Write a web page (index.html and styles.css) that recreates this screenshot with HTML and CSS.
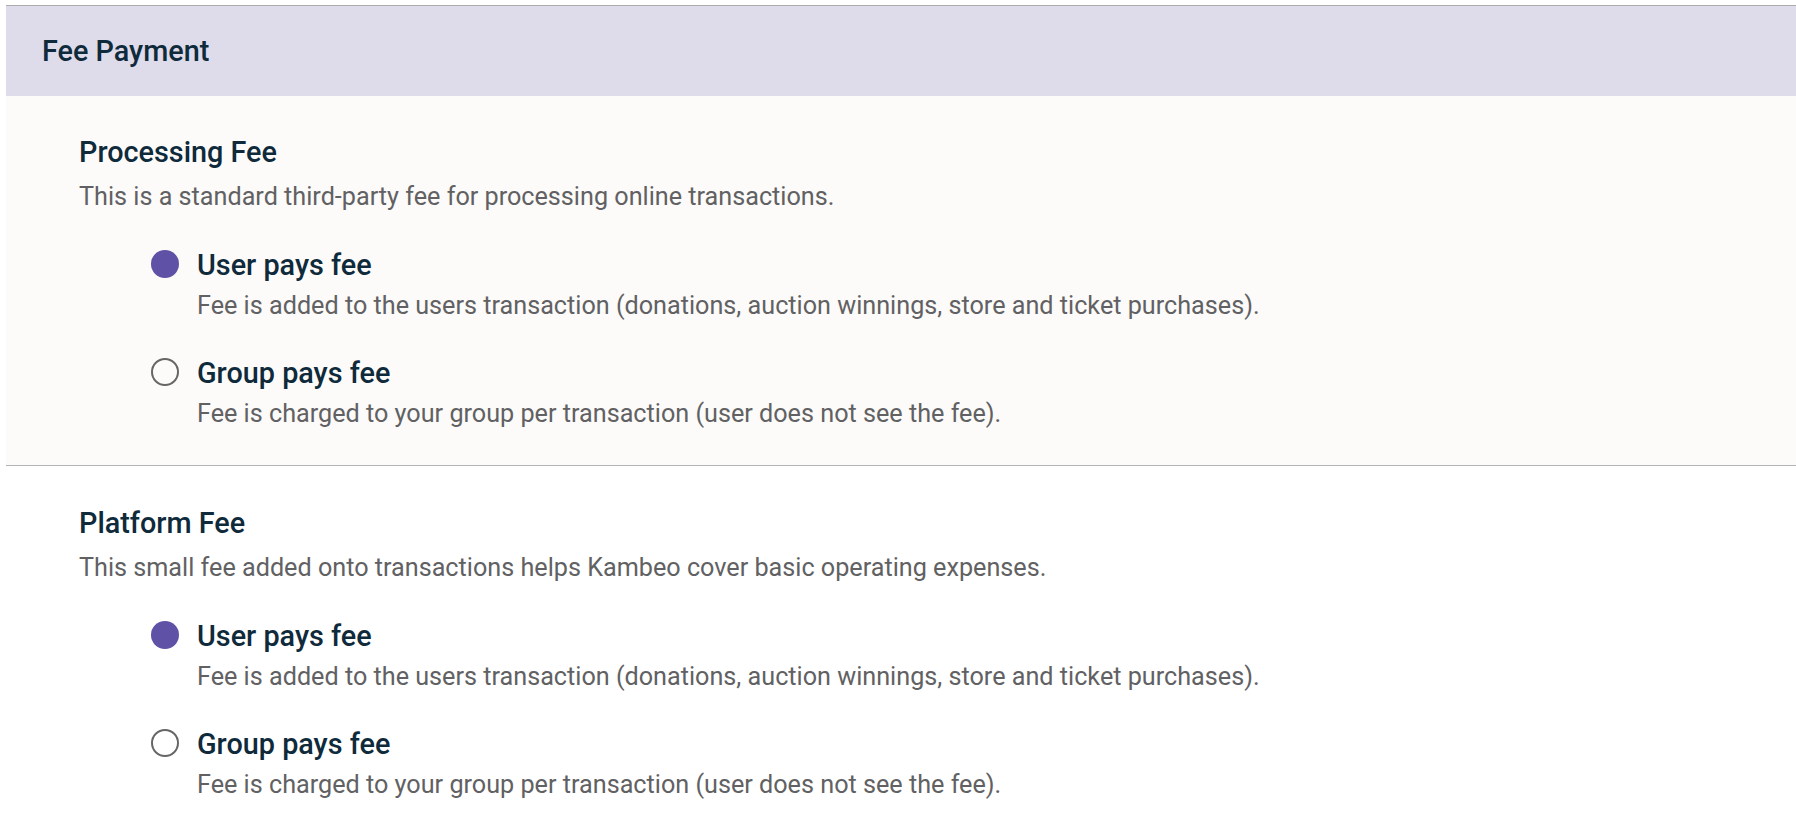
FILE: index.html
```html
<!DOCTYPE html>
<html lang="en">
<head>
<meta charset="utf-8">
<title>Fee Payment</title>
<link rel="stylesheet" href="styles.css">
</head>
<body>
<div class="panel">
  <div class="panel-header">Fee Payment</div>

  <section class="fee-section fee-section--tinted">
    <h2 class="fee-title">Processing Fee</h2>
    <p class="fee-desc">This is a standard third-party fee for processing online transactions.</p>
    <div class="options">
      <div class="option">
        <span class="radio radio--on"></span>
        <div class="option-text">
          <div class="option-label">User pays fee</div>
          <div class="option-desc">Fee is added to the users transaction (donations, auction winnings, store and ticket purchases).</div>
        </div>
      </div>
      <div class="option">
        <span class="radio"></span>
        <div class="option-text">
          <div class="option-label">Group pays fee</div>
          <div class="option-desc">Fee is charged to your group per transaction (user does not see the fee).</div>
        </div>
      </div>
    </div>
  </section>

  <section class="fee-section fee-section--plain">
    <h2 class="fee-title">Platform Fee</h2>
    <p class="fee-desc">This small fee added onto transactions helps Kambeo cover basic operating expenses.</p>
    <div class="options">
      <div class="option">
        <span class="radio radio--on"></span>
        <div class="option-text">
          <div class="option-label">User pays fee</div>
          <div class="option-desc">Fee is added to the users transaction (donations, auction winnings, store and ticket purchases).</div>
        </div>
      </div>
      <div class="option">
        <span class="radio"></span>
        <div class="option-text">
          <div class="option-label">Group pays fee</div>
          <div class="option-desc">Fee is charged to your group per transaction (user does not see the fee).</div>
        </div>
      </div>
    </div>
  </section>
</div>
</body>
</html>
```

FILE: styles.css
```css
html, body {
  margin: 0;
  padding: 0;
  background: #ffffff;
}

body {
  font-family: Roboto, "Liberation Sans", Arial, sans-serif;
  color: #0e2a3b;
}

.panel {
  margin: 5px 0 0 6px;
  border-top: 1px solid #ababab;
}

.panel-header {
  height: 90px;
  background: #dedbea;
  display: flex;
  align-items: center;
  padding-left: 36px;
  font-size: 28.8px;
  line-height: 36px;
  font-weight: 500;
  color: #0e2a3b;
}

.fee-section {
  padding: 38px 0 33px 73px;
}

.fee-section--tinted {
  background: #fcfbf9;
  border-bottom: 1px solid #b3b3b3;
}

.fee-section--plain {
  background: #ffffff;
  padding-top: 39px;
}

.fee-title {
  margin: 0;
  font-size: 28.8px;
  line-height: 36px;
  font-weight: 500;
  color: #0e2a3b;
}

.fee-desc {
  margin: 9px 0 0;
  font-size: 25.2px;
  line-height: 36px;
  color: #616163;
}

.options {
  margin-top: 32px;
  padding-left: 72px;
  display: flex;
  flex-direction: column;
  gap: 31px;
}

.option {
  display: flex;
  align-items: flex-start;
  gap: 18px;
}

.radio {
  flex: none;
  box-sizing: border-box;
  width: 28px;
  height: 28px;
  margin-top: 3px;
  border-radius: 50%;
  border: 2.5px solid #666666;
  background: transparent;
}

.radio--on {
  border: none;
  background: #5f51a5;
}

.option-label {
  font-size: 28.8px;
  line-height: 36px;
  font-weight: 500;
  color: #0e2a3b;
}

.option-desc {
  margin-top: 5px;
  font-size: 25.2px;
  line-height: 36px;
  color: #616163;
}
```
